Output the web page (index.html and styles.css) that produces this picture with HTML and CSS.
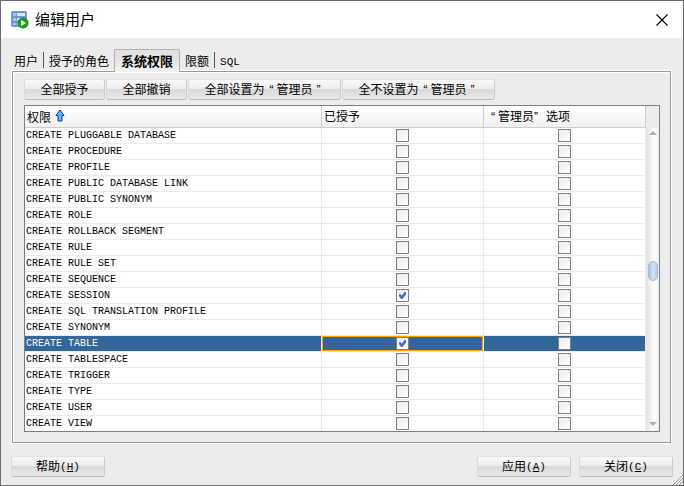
FILE: index.html
```html
<!DOCTYPE html>
<html lang="zh-CN">
<head>
<meta charset="utf-8">
<title>编辑用户</title>
<link rel="stylesheet" href="styles.css">
</head>
<body>
<div class="window">
  <header class="titlebar">
    <svg class="app-icon" width="18" height="18" viewBox="0 0 18 18">
      <rect x="0.5" y="0.5" width="15" height="15" rx="1" fill="#6f93cc" stroke="#7b9bd0"/>
      <path d="M2 2h3v3H2zM2 7h3v3H2zM2 12h3v2H2z" fill="#a9c2ea"/>
      <path d="M6 2h8v3H6zM6 7h8v3H6zM6 12h8v2H6z" fill="#dbe8fa"/>
      <circle cx="12" cy="12" r="5" fill="#18a318" stroke="#0d850d"/>
      <path d="M10 9l5 3-5 3z" fill="#fff"/>
    </svg>
    <h1 class="title">编辑用户</h1>
    <button class="close" type="button" aria-label="关闭">
      <svg width="12" height="12" viewBox="0 0 12 12"><path d="M0.500 0.500l11 11M11.500 0.500l-11 11" stroke="#000" stroke-width="1.100"/></svg>
    </button>
  </header>
  <nav class="tabs" role="tablist">
    <button class="tab" type="button" role="tab">用户</button>
    <button class="tab divided" type="button" role="tab">授予的角色</button>
    <button class="tab selected" type="button" role="tab" aria-selected="true">系统权限</button>
    <button class="tab" type="button" role="tab">限额</button>
    <button class="tab divided key" type="button" role="tab">SQL</button>
  </nav>
  <main class="panel">
    <div class="toolbar">
      <button class="btn" type="button">全部授予</button>
      <button class="btn" type="button">全部撤销</button>
      <button class="btn wide" type="button">全部设置为<span class="quote open">“</span>管理员<span class="quote">”</span></button>
      <button class="btn wide" type="button">全不设置为<span class="quote open">“</span>管理员<span class="quote">”</span></button>
    </div>
    <div class="grid">
      <table class="privileges">
        <thead>
          <tr>
            <th class="name">权限<svg class="sort" width="10" height="14" viewBox="0 0 10 14"><path d="M5 1L9 6.500H7V12H3V6.500H1z" fill="#58b4f5" stroke="#0b3a9b"/></svg></th>
            <th>已授予</th>
            <th><span class="quote open">“</span>管理员<span class="quote">”</span>选项</th>
          </tr>
        </thead>
        <tbody>
          <tr><td>CREATE PLUGGABLE DATABASE</td><td><input type="checkbox" aria-label="已授予"></td><td><input type="checkbox" aria-label="管理员选项"></td></tr>
          <tr><td>CREATE PROCEDURE</td><td><input type="checkbox" aria-label="已授予"></td><td><input type="checkbox" aria-label="管理员选项"></td></tr>
          <tr><td>CREATE PROFILE</td><td><input type="checkbox" aria-label="已授予"></td><td><input type="checkbox" aria-label="管理员选项"></td></tr>
          <tr><td>CREATE PUBLIC DATABASE LINK</td><td><input type="checkbox" aria-label="已授予"></td><td><input type="checkbox" aria-label="管理员选项"></td></tr>
          <tr><td>CREATE PUBLIC SYNONYM</td><td><input type="checkbox" aria-label="已授予"></td><td><input type="checkbox" aria-label="管理员选项"></td></tr>
          <tr><td>CREATE ROLE</td><td><input type="checkbox" aria-label="已授予"></td><td><input type="checkbox" aria-label="管理员选项"></td></tr>
          <tr><td>CREATE ROLLBACK SEGMENT</td><td><input type="checkbox" aria-label="已授予"></td><td><input type="checkbox" aria-label="管理员选项"></td></tr>
          <tr><td>CREATE RULE</td><td><input type="checkbox" aria-label="已授予"></td><td><input type="checkbox" aria-label="管理员选项"></td></tr>
          <tr><td>CREATE RULE SET</td><td><input type="checkbox" aria-label="已授予"></td><td><input type="checkbox" aria-label="管理员选项"></td></tr>
          <tr><td>CREATE SEQUENCE</td><td><input type="checkbox" aria-label="已授予"></td><td><input type="checkbox" aria-label="管理员选项"></td></tr>
          <tr><td>CREATE SESSION</td><td><input type="checkbox" aria-label="已授予" checked></td><td><input type="checkbox" aria-label="管理员选项"></td></tr>
          <tr><td>CREATE SQL TRANSLATION PROFILE</td><td><input type="checkbox" aria-label="已授予"></td><td><input type="checkbox" aria-label="管理员选项"></td></tr>
          <tr><td>CREATE SYNONYM</td><td><input type="checkbox" aria-label="已授予"></td><td><input type="checkbox" aria-label="管理员选项"></td></tr>
          <tr class="current"><td>CREATE TABLE</td><td class="focused"><input type="checkbox" aria-label="已授予" checked></td><td><input type="checkbox" aria-label="管理员选项"></td></tr>
          <tr><td>CREATE TABLESPACE</td><td><input type="checkbox" aria-label="已授予"></td><td><input type="checkbox" aria-label="管理员选项"></td></tr>
          <tr><td>CREATE TRIGGER</td><td><input type="checkbox" aria-label="已授予"></td><td><input type="checkbox" aria-label="管理员选项"></td></tr>
          <tr><td>CREATE TYPE</td><td><input type="checkbox" aria-label="已授予"></td><td><input type="checkbox" aria-label="管理员选项"></td></tr>
          <tr><td>CREATE USER</td><td><input type="checkbox" aria-label="已授予"></td><td><input type="checkbox" aria-label="管理员选项"></td></tr>
          <tr><td>CREATE VIEW</td><td><input type="checkbox" aria-label="已授予"></td><td><input type="checkbox" aria-label="管理员选项"></td></tr>
        </tbody>
      </table>
      <div class="scroll">
        <div class="corner"></div>
        <div class="track">
          <svg width="8" height="4" viewBox="0 0 8 4"><path d="M4 0l4 4H0z" fill="#b0b0b0"/></svg>
          <div class="rail"><div class="before"></div><div class="thumb"></div><div class="after"></div></div>
          <svg width="8" height="4" viewBox="0 0 8 4"><path d="M0 0h8L4 4z" fill="#b0b0b0"/></svg>
        </div>
      </div>
    </div>
  </main>
  <footer class="actions">
    <button class="btn action help" type="button">帮助<span class="key">(<u>H</u>)</span></button>
    <button class="btn action" type="button">应用<span class="key">(<u>A</u>)</span></button>
    <button class="btn action" type="button">关闭<span class="key">(<u>C</u>)</span></button>
  </footer>
  <svg class="grip" width="10" height="10" viewBox="0 0 10 10"><path d="M0 10L10 0M3 10l7-7M6 10l4-4" stroke="#96968a"/><path d="M1.500 10L10 1.500M4.500 10L10 4.500" stroke="#fff"/></svg>
</div>
</body>
</html>
```
FILE: styles.css
```css
* { box-sizing: border-box; }

body {
  margin: 0;
  font: 12px/16px "Liberation Sans", "Noto Sans CJK SC", sans-serif;
  color: #000;
}

button {
  margin: 0;
  padding: 0;
  border: 0;
  background: none;
  font: inherit;
  color: inherit;
  white-space: nowrap;
}

.window {
  position: relative;
  display: flex;
  flex-direction: column;
  min-height: 100vh;
  border: 1px solid #6b6b6b;
  background: #ececec;
}

.titlebar {
  display: flex;
  align-items: center;
  height: 37px;
  padding: 0 15px 0 10px;
  background: #fff;
}

.title {
  flex: 1;
  margin: 0 0 0 6px;
  font-size: 15px;
  font-weight: 400;
  line-height: 20px;
}

.close { display: flex; }

.tabs {
  display: flex;
  align-items: flex-end;
  height: 33px;
  padding-left: 8px;
}

.tab {
  height: 16px;
  margin-bottom: 3px;
  padding: 2px 5px 0;
}

.tab.divided { border-left: 1px solid #555; }

.tab.selected {
  z-index: 1;
  height: 23px;
  margin-bottom: -1px;
  padding: 1px 6px 0;
  border: 1px solid #b0b0b0;
  border-bottom: 0;
  border-radius: 2px 2px 0 0;
  background: linear-gradient(#e2e2e2, #e2e2e2 40%, #f2f2f2);
  font-size: 13px;
  font-weight: 700;
}

.key, .privileges td { font-family: "Liberation Mono", monospace; font-size: 10px; }

.panel {
  margin: 0 12px 0 11px;
  padding: 7px 10px 10px 11px;
  border: 1px solid #979797;
  box-shadow: 0 0 0 1px #fff, inset 1px 1px #fff;
}

.toolbar {
  display: flex;
  gap: 1px;
  margin-bottom: 5px;
}

.btn {
  display: flex;
  align-items: center;
  justify-content: center;
  width: 81px;
  height: 21px;
  border: 1px solid #d2d2d2;
  border-color: #e2e2e2 #cbcbcb #bdbdbd #dadada;
  border-radius: 3px;
  background: linear-gradient(#fafafa, #ededed 45%, #d9d9d9 50%, #e9e9e9);
}

.btn.wide { width: 153px; }

.quote { display: inline-block; width: 12px; }
.quote.open { padding-right: 3px; text-align: right; }

.grid {
  display: flex;
  border: 1px solid #808080;
  background: #fff;
}

.privileges {
  flex: 1;
  width: 100%;
  table-layout: fixed;
  border-collapse: separate;
  border-spacing: 0;
}

th {
  width: 162px;
  height: 22px;
  padding: 1px 2px 0;
  border-right: 1px solid #cdcdcd;
  border-bottom: 1px solid #cdcdcd;
  background: linear-gradient(#fff, #f1f1f1);
  font-weight: 400;
  text-align: left;
}

th.name { width: auto; }

.sort { margin-left: 4px; vertical-align: -1px; }

.privileges td {
  height: 16px;
  padding: 0;
  border-right: 1px solid #ebebeb;
  border-bottom: 1px solid #ebebeb;
  line-height: 14px;
  text-align: center;
}

.privileges td:first-child { padding: 1px 0 0 1px; text-align: left; }

.privileges tr:last-child td { height: 15px; border-bottom: 0; }

.privileges .current td { background: #336699; background-clip: padding-box; color: #fff; }

.privileges .current .focused { box-shadow: inset 0 0 0 1px #ffa500; }

input {
  display: block;
  appearance: none;
  width: 13px;
  height: 13px;
  margin: 1px auto;
  border: 1px solid #808080;
  background: linear-gradient(135deg, #ebebeb, #fff);
}

input:checked::after {
  content: "";
  display: block;
  width: 7px;
  height: 7px;
  margin: 2px;
  background: #3c6fc8;
  clip-path: polygon(0 35%, 20% 30%, 38% 55%, 80% 0, 100% 0, 100% 35%, 50% 100%, 30% 100%, 0 60%);
}

.scroll {
  display: flex;
  flex: none;
  flex-direction: column;
  width: 13px;
}

.corner { height: 22px; background: #ececec; }

.track {
  display: flex;
  flex: 1;
  flex-direction: column;
  align-items: center;
  padding: 3px 1px 5px 2px;
  background: linear-gradient(90deg, #e2e2e2, #f5f5f5 45%, #fff 70%, #ececec);
}

.rail {
  display: flex;
  flex: 1;
  flex-direction: column;
  align-self: stretch;
}

.before { flex: 126; }
.after { flex: 142; }

.thumb {
  height: 20px;
  border: 1px solid #a3bbd7;
  border-radius: 5px;
  background: linear-gradient(90deg, #a9c4e3, #d2e3f5 50%, #b6cee9);
}

.actions {
  display: flex;
  gap: 8px;
  margin-top: 13px;
  padding: 0 10px;
}

.action { width: 94px; }
.help { margin-right: auto; }
.key { font-size: 11px; }

.grip { position: absolute; right: 0; bottom: 0; }
```
